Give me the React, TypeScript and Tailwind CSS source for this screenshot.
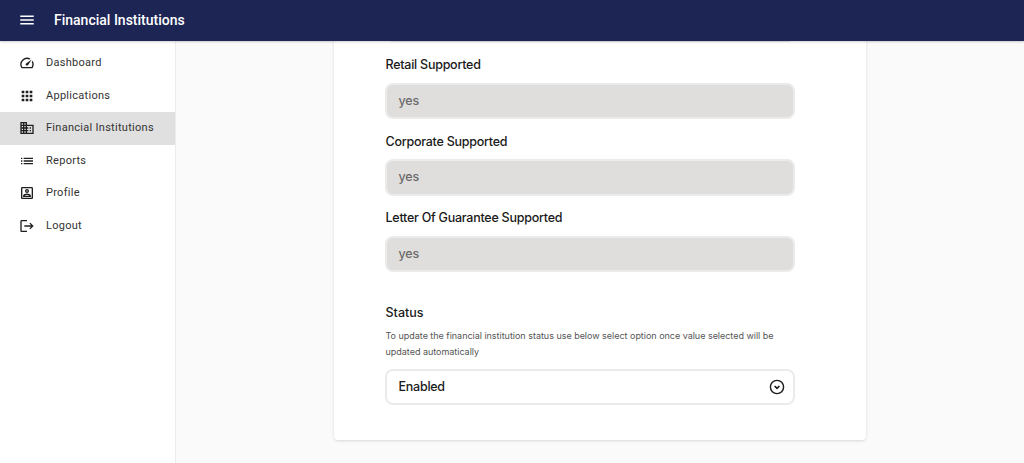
const navItems = [
  { label: 'Dashboard', d: 'M20.38 8.57l-1.23 1.85a8 8 0 0 1-.22 7.58H5.07A8 8 0 0 1 15.58 6.85l1.85-1.23A10 10 0 0 0 3.35 19a2 2 0 0 0 1.72 1h13.85a2 2 0 0 0 1.74-1 10 10 0 0 0-.27-10.44zm-9.79 6.84a2 2 0 0 0 2.83 0l5.66-8.49-8.49 5.66a2 2 0 0 0 0 2.83z' },
  { label: 'Applications', d: 'M4 8h4V4H4v4zm6 12h4v-4h-4v4zm-6 0h4v-4H4v4zm0-6h4v-4H4v4zm6 0h4v-4h-4v4zm6-10v4h4V4h-4zm-6 4h4V4h-4v4zm6 6h4v-4h-4v4zm0 6h4v-4h-4v4z' },
  { label: 'Financial Institutions', active: true, d: 'M12 7V3H2v18h20V7H12zM6 19H4v-2h2v2zm0-4H4v-2h2v2zm0-4H4V9h2v2zm0-4H4V5h2v2zm4 12H8v-2h2v2zm0-4H8v-2h2v2zm0-4H8V9h2v2zm0-4H8V5h2v2zm10 12h-8v-2h2v-2h-2v-2h2v-2h-2V9h8v10zm-2-8h-2v2h2v-2zm0 4h-2v2h2v-2z' },
  { label: 'Reports', d: 'M3 13h2v-2H3v2zm0 4h2v-2H3v2zm0-8h2V7H3v2zm4 4h14v-2H7v2zm0 4h14v-2H7v2zM7 7v2h14V7H7z' },
  { label: 'Profile', d: 'M19 5v14H5V5h14m0-2H5c-1.11 0-2 .9-2 2v14c0 1.1.89 2 2 2h14c1.1 0 2-.9 2-2V5c0-1.1-.9-2-2-2zm-7 9c-1.65 0-3-1.35-3-3s1.35-3 3-3 3 1.35 3 3-1.35 3-3 3zm0-4c-.55 0-1 .45-1 1s.45 1 1 1 1-.45 1-1-.45-1-1-1zm6 10H6v-1.53c0-2.5 3.97-3.58 6-3.58s6 1.08 6 3.58V18zm-9.69-2h7.38c-.69-.56-2.38-1.12-3.69-1.12s-3.01.56-3.69 1.12z' },
  { label: 'Logout', d: 'M17 7l-1.41 1.41L18.17 11H8v2h10.17l-2.58 2.58L17 17l5-5zM4 5h8V3H4c-1.1 0-2 .9-2 2v14c0 1.1.9 2 2 2h8v-2H4V5z' },
]

const readOnlyFields = ['Retail Supported', 'Corporate Supported', 'Letter Of Guarantee Supported']

function Icon({ d, className }: { d: string; className: string }) {
  return (
    <svg viewBox="0 0 24 24" className={className} fill="currentColor">
      <path d={d} />
    </svg>
  )
}

function ReadOnlyInput({ value }: { value: string }) {
  return (
    <div className="flex h-[36.5px] w-[410px] items-center rounded-[8px] border-2 border-[#ebebeb] bg-[#dfdedd] pl-[12px] pt-[1px] text-[12.5px] font-medium tracking-[-0.2px] text-[#6b6b6b]">
      {value}
    </div>
  )
}

export default function App() {
  return (
    <div className="flex h-[463px] w-[1024px] flex-col overflow-hidden bg-[#fafafa] font-['Roboto',sans-serif]">
      <header className="z-10 flex h-[41px] shrink-0 items-center bg-[#1c2554] pb-[1px] shadow-[0_1px_2px_rgba(0,0,0,0.2)]">
        <Icon d="M3 18h18v-2H3v2zm0-5h18v-2H3v2zm0-7v2h18V6H3z" className="ml-[18px] h-[18px] w-[18px] text-white" />
        <span className="ml-[18px] text-[14px] font-medium text-white">Financial Institutions</span>
      </header>

      <div className="flex min-h-0 flex-1">
        <nav className="w-[176px] shrink-0 border-r border-[#ececec] bg-white pt-[6px]">
          {navItems.map((item) => (
            <div
              key={item.label}
              className={`flex h-[32.5px] items-center pl-[19px] ${item.active ? 'bg-[#e0e0e0]' : ''}`}
            >
              <Icon d={item.d} className="h-[16px] w-[16px] text-[#1f1f1f]" />
              <span className="ml-[11px] text-[11px] tracking-[0.28px] text-[#333333]">{item.label}</span>
            </div>
          ))}
        </nav>

        <main className="flex min-w-0 flex-1 flex-col items-center justify-end overflow-hidden pb-[23px] pr-[1px]">
          <div className="w-[532px] shrink-0 rounded-[4px] bg-white pb-[35px] pl-[51px] font-['Inter',sans-serif] shadow-[0_1px_3px_rgba(0,0,0,0.14)]">
            <div className="mb-[13px] h-[37px] w-[410px] rounded-[8px] border-2 border-[#ebebeb] bg-white" />

            <div className="flex flex-col gap-[12.5px]">
              {readOnlyFields.map((label) => (
                <div key={label}>
                  <div className="mb-[7.5px] pl-[1px] text-[12.5px] font-medium leading-[20px] tracking-[-0.25px] text-[#1a1a1a]">{label}</div>
                  <ReadOnlyInput value="yes" />
                </div>
              ))}
            </div>

            <div className="mt-[31px] pl-[1px] text-[12.5px] font-medium leading-[20px] text-[#1a1a1a]">Status</div>
            <p className="mt-[5px] w-[410px] pl-[1px] text-[9px] leading-[16px] tracking-[-0.02px] text-[#555555]">
              To update the financial institution status use below select option once value selected will be updated automatically
            </p>
            <div className="mt-[9px] flex h-[36px] w-[410px] items-center justify-between rounded-[8px] border-2 border-[#ebebeb] bg-white pl-[12px] pr-[8px]">
              <span className="text-[12.5px] font-medium tracking-[-0.25px] text-[#1a1a1a]">Enabled</span>
              <svg viewBox="0 0 16 16" className="h-[16px] w-[16px]" fill="none" stroke="#1a1a1a">
                <circle cx="8" cy="8" r="6.6" strokeWidth="1.4" />
                <path d="M5.6 7l2.4 2.4L10.4 7" strokeWidth="1.7" />
              </svg>
            </div>
          </div>
        </main>
      </div>
    </div>
  )
}
